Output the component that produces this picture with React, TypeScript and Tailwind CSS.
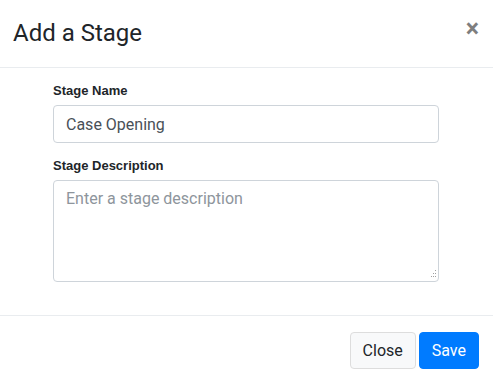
export default function App() {
  return (
    <div className="w-[493px] h-[383px] bg-white font-['Roboto',sans-serif] text-[#212529] flex flex-col">
      <div className="h-[68px] shrink-0 flex items-start justify-between border-b border-[#e9ecef] pl-[13px] pr-[14px]">
        <h5 className="mt-[18px] text-[24px] leading-[30px] font-normal">Add a Stage</h5>
        <button className="mt-[14px] text-[25px] leading-[30px] font-bold text-black opacity-50">
          ×
        </button>
      </div>

      <div className="flex flex-col pt-[13px] pl-[53px] pr-[54px] pb-[33px] border-b border-[#e9ecef]">
        <label className="font-['Liberation_Sans',Arial,sans-serif] text-[13px] leading-[20px] font-bold mb-[4px]">
          Stage Name
        </label>
        <input
          className="h-[38px] px-[12px] text-[16px] text-[#495057] border border-[#ced4da] rounded-[4px] outline-none"
          defaultValue="Case Opening"
        />
        <label className="mt-[13px] font-['Liberation_Sans',Arial,sans-serif] text-[13px] leading-[20px] font-bold mb-[4px]">
          Stage Description
        </label>
        <div className="relative">
          <textarea
            className="block w-full h-[102px] px-[12px] py-[6px] text-[16px] leading-[24px] text-[#495057] placeholder:text-[#8e959c] border border-[#ced4da] rounded-[4px] outline-none resize-none"
            placeholder="Enter a stage description"
          />
          <svg className="absolute right-[2px] bottom-[4px]" width="8" height="8" viewBox="0 0 8 8">
            <rect x="6" y="0" width="1" height="1" fill="#a0a0a0" />
            <rect x="4" y="3" width="1" height="1" fill="#a0a0a0" />
            <rect x="6" y="3" width="1" height="1" fill="#a0a0a0" />
            <rect x="2" y="6" width="1" height="1" fill="#a0a0a0" />
            <rect x="4" y="6" width="1" height="1" fill="#a0a0a0" />
            <rect x="6" y="6" width="1" height="1" fill="#a0a0a0" />
          </svg>
        </div>
      </div>

      <div className="flex justify-end gap-[3px] pt-[16px] pr-[14px]">
        <button className="h-[37px] px-[12px] text-[16px] text-[#212529] bg-[#f8f9fa] border border-[#dddddd] rounded-[4px]">
          Close
        </button>
        <button className="h-[37px] px-[12px] text-[16px] text-white bg-[#007bff] border border-[#007bff] rounded-[4px]">
          Save
        </button>
      </div>
    </div>
  );
}
